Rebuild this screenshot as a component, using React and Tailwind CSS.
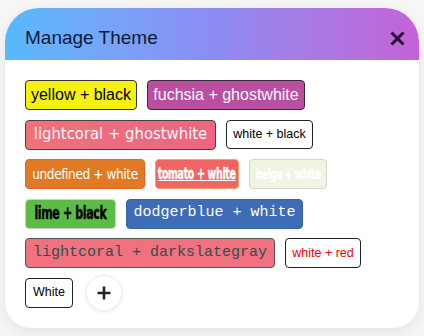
import React from 'react'

const sans = "font-['Liberation_Sans',Arial,sans-serif]"
const verdana = "font-['DejaVu_Sans_Condensed','DejaVu_Sans',Tahoma,sans-serif]"
const mono = "font-['Liberation_Mono','Courier_New',monospace]"
const impact = "font-['DejaVu_Sans_Condensed','DejaVu_Sans',Impact,sans-serif] font-bold"

function Chip({ className, children }) {
  return (
    <button className={`flex items-center justify-center rounded-[4px] border whitespace-nowrap ${className}`}>
      {children}
    </button>
  )
}

// Impact isn't available, so squeeze a bold condensed face
function Narrow({ children, underline }) {
  return (
    <span className={`inline-block scale-x-[0.7] tracking-[-0.03em] [-webkit-text-stroke:0.4px_currentColor] ${underline ? 'underline' : ''}`}>{children}</span>
  )
}

export default function App() {
  return (
    <div className="min-h-screen bg-[#f6f6f6] pt-[8px] pl-[5px] pr-[5px]">
      <div className="w-[414px] h-[320px] rounded-t-[34px] rounded-b-[26px] bg-white shadow-[0_4px_14px_rgba(0,0,0,0.08)] overflow-hidden">
        {/* Header */}
        <div className="h-[52px] bg-gradient-to-r from-[#55bafc] via-[#8b8cf2] to-[#c362d6] flex items-center justify-between pl-[20px] pr-[14px] pt-[8px]">
          <h1 className={`${sans} text-[19px] text-[#0c1a3c]`}>Manage Theme</h1>
          <svg width="15" height="15" viewBox="0 0 15 15">
            <path d="M1.5 1.5 L13.5 13.5 M13.5 1.5 L1.5 13.5" stroke="#2a0f38" strokeWidth="3" />
          </svg>
        </div>

        {/* Themes */}
        <div className="px-[20px] pt-[20px] flex flex-col gap-[9.5px]">
          <div className="flex gap-[10px]">
            <Chip className={`${sans} h-[30px] w-[112px] bg-[#f5f211] border-[#333] text-black text-[16px]`}>yellow + black</Chip>
            <Chip className={`${sans} h-[30px] w-[158px] bg-[#b94f9f] border-[#3a2a35] text-[#f8f8ff] text-[16px]`}>fuchsia + ghostwhite</Chip>
          </div>
          <div className="flex gap-[10px]">
            <Chip className={`${verdana} h-[30px] w-[191px] bg-gradient-to-r from-[#ef727a] to-[#ee6482] border-[#444] border-[1.5px] text-[#f8f8ff] text-[16.5px]`}>lightcoral + ghostwhite</Chip>
            <Chip className={`${sans} h-[29px] w-[87px] bg-white border-[#222] text-black text-[12.5px]`}>white + black</Chip>
          </div>
          <div className="flex gap-[10px]">
            <Chip className={`${verdana} h-[30px] w-[120px] bg-[#e07a24] border-[#e8602a] text-white text-[13.5px] tracking-[-0.4px]`}>undefined + white</Chip>
            <Chip className={`${impact} h-[30px] w-[84px] bg-[#f06464] border-[#f4a066] text-white text-[15px]`}><Narrow underline>tomato + white</Narrow></Chip>
            <Chip className={`${impact} h-[30px] w-[78px] bg-[#f0f4e2] border-[#d6d6d0] text-white text-[14px]`}><Narrow>beige + white</Narrow></Chip>
          </div>
          <div className="flex gap-[10px]">
            <Chip className={`${impact} h-[30px] w-[91px] bg-[#5cbd44] border-[#c8d8c0] text-black text-[17.5px]`}><Narrow>lime + black</Narrow></Chip>
            <Chip className={`${mono} h-[30px] w-[177px] bg-[#3e6cb6] border-[#3a64a8] text-white text-[15px]`}>dodgerblue + white</Chip>
          </div>
          <div className="flex gap-[10px]">
            <Chip className={`${mono} h-[30px] w-[250px] bg-[#f1717e] border-[#555] text-[#2f4f4f] text-[15px]`}>lightcoral + darkslategray</Chip>
            <Chip className={`${sans} h-[30px] w-[76px] bg-white border-[#222] text-[#e00] text-[12.5px]`}>white + red</Chip>
          </div>
          <div className="flex gap-[13px] items-center h-[30px]">
            <Chip className={`${sans} h-[30px] w-[48px] bg-white border-[#222] text-black text-[12.5px]`}>White</Chip>
            <button className="shrink-0 w-[36px] h-[36px] rounded-full bg-white border border-[#eef0f4] shadow-[0_1px_4px_rgba(0,0,0,0.1)] flex items-center justify-center">
              <svg width="14" height="14" viewBox="0 0 14 14">
                <path d="M7 0.5 V13.5 M0.5 7 H13.5" stroke="#222" strokeWidth="2.6" />
              </svg>
            </button>
          </div>
        </div>
      </div>
    </div>
  )
}
